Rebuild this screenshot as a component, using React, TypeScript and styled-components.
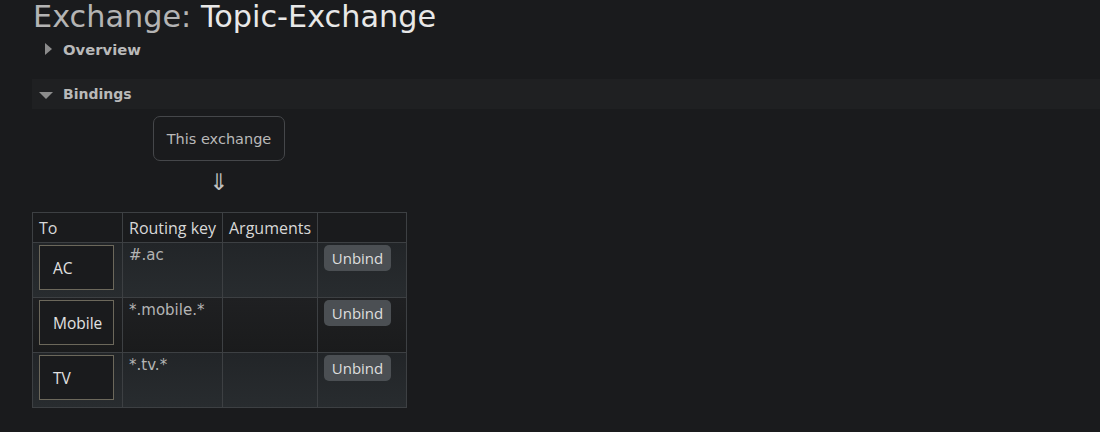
import React from "react";
import styled, { createGlobalStyle } from "styled-components";

const Global = createGlobalStyle`
  html, body { margin: 0; padding: 0; background: #1a1b1d; }
  body { font-family: "DejaVu Sans", Verdana, sans-serif; color: #c8c8c8; }
`;

const Page = styled.div`
  padding: 0 0 0 32px;
  width: 1068px;
  height: 432px;
  overflow: hidden;
`;

const Title = styled.h1`
  margin: 0;
  padding: 0 0 0 1px;
  font-weight: normal;
  font-size: 30.3px;
  line-height: 34px;
  color: #b4b4b4;
`;

const Name = styled.span`
  color: #e8e8e8;
`;

const SectionHead = styled.div<{ $open?: boolean }>`
  display: flex;
  align-items: center;
  height: 30px;
  margin-top: ${(p) => (p.$open ? "15px" : "0")};
  background: ${(p) => (p.$open ? "#1f2022" : "transparent")};
  font-weight: bold;
  font-size: ${(p) => (p.$open ? "14px" : "14.8px")};
  color: #b9b9b9;
  padding-left: ${(p) => (p.$open ? "7px" : "13px")};
  gap: ${(p) => (p.$open ? "10px" : "11px")};
`;

const TriRight = styled.span`
  width: 0;
  height: 0;
  border-top: 6px solid transparent;
  border-bottom: 6px solid transparent;
  border-left: 7px solid #8c8c8c;
`;

const TriDown = styled.span`
  width: 0;
  height: 0;
  margin-top: 2px;
  border-left: 7px solid transparent;
  border-right: 7px solid transparent;
  border-top: 7px solid #8c8c8c;
`;

const Flow = styled.div`
  display: flex;
  flex-direction: column;
  align-items: center;
  width: 374px;
  padding-top: 7px;
`;

const ExchangeBox = styled.div`
  box-sizing: border-box;
  width: 132px;
  height: 45px;
  border: 1px solid #45474a;
  border-radius: 7px;
  display: flex;
  align-items: center;
  justify-content: center;
  font-size: 14.5px;
  color: #b9b9b9;
`;

const Arrow = styled.div`
  font-size: 23px;
  line-height: 24px;
  margin-top: 9px;
  color: #c0c0c0;
`;

const Table = styled.table`
  margin-top: 18px;
  border-collapse: collapse;
  font-family: "Open Sans", "Noto Sans", sans-serif;
  font-size: 16px;
  color: #d8d8d8;
`;

const Th = styled.th<{ $w: number }>`
  width: ${(p) => p.$w}px;
  box-sizing: border-box;
  height: 30px;
  padding: 0 5px 0 6px;
  border: 1px solid #3d4043;
  text-align: left;
  font-weight: normal;
  vertical-align: middle;
  white-space: nowrap;
`;

const Tr = styled.tr<{ $odd: boolean }>`
  background: ${(p) =>
    p.$odd
      ? "linear-gradient(#222528, #282c2f)"
      : "linear-gradient(#1f2022, #1a1b1c)"};
`;

const Td = styled.td`
  height: 55px;
  box-sizing: border-box;
  padding: 2px 6px 0;
  border: 1px solid #3d4043;
  vertical-align: top;
`;

const Key = styled.span`
  display: block;
  font-family: "DejaVu Sans", Verdana, sans-serif;
  font-size: 15px;
  color: #b4b4b4;
  padding-top: 1px;
  line-height: 18px;
`;

const Target = styled.div`
  box-sizing: border-box;
  width: 75px;
  height: 45px;
  border: 1px solid #6c685b;
  background: #1a1b1d;
  display: flex;
  align-items: center;
  padding: 1px 0 0 13px;
  font-size: 15.5px;
  color: #e2e2e2;
`;

const Button = styled.button`
  display: block;
  margin: 0;
  width: 67px;
  height: 26px;
  border: none;
  border-radius: 5px;
  background: #4b4f53;
  color: #dedede;
  font-family: "Open Sans", "Noto Sans", sans-serif;
  font-size: 15px;
  padding: 0;
`;

const rows = [
  { to: "AC", key: "#.ac" },
  { to: "Mobile", key: "*.mobile.*" },
  { to: "TV", key: "*.tv.*" },
];

export default function App() {
  return (
    <Page>
      <Global />
      <Title>
        Exchange: <Name>Topic-Exchange</Name>
      </Title>
      <SectionHead>
        <TriRight />
        Overview
      </SectionHead>
      <SectionHead $open>
        <TriDown />
        Bindings
      </SectionHead>
      <Flow>
        <ExchangeBox>This exchange</ExchangeBox>
        <Arrow>⇓</Arrow>
      </Flow>
      <Table>
        <thead>
          <tr>
            <Th $w={90}>To</Th>
            <Th $w={100}>Routing key</Th>
            <Th $w={95}>Arguments</Th>
            <Th $w={89}></Th>
          </tr>
        </thead>
        <tbody>
          {rows.map((r, i) => (
            <Tr key={r.to} $odd={i % 2 === 0}>
              <Td>
                <Target>{r.to}</Target>
              </Td>
              <Td>
                <Key>{r.key}</Key>
              </Td>
              <Td />
              <Td>
                <Button>Unbind</Button>
              </Td>
            </Tr>
          ))}
        </tbody>
      </Table>
    </Page>
  );
}
